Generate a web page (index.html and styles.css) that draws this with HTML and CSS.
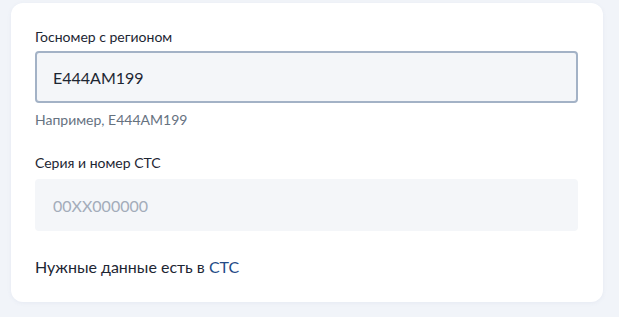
FILE: index.html
```
<html>
<head>
  <meta charset="UTF-8" />
  <link rel="stylesheet" href="styles.css">
</head>
<body>
  <div class="card">
    <div class="field">
      <label class="label">Госномер с регионом</label>
      <div class="input input-active">E444AM199</div>
      <div class="hint">Например, E444AM199</div>
    </div>
    <div class="field field-sts">
      <label class="label">Серия и номер СТС</label>
      <div class="input input-empty">00XX000000</div>
    </div>
    <p class="note">Нужные данные есть в <a href="#" class="link">СТС</a></p>
  </div>
</body>
</html>
```

FILE: styles.css
```
body {
    margin: 0;
    background: #f1f4f9;
    font-family: Lato, "Noto Sans", sans-serif;
    color: #1d2633;
}

.card {
    margin: 3px 0 0 11px;
    width: 592px;
    box-sizing: border-box;
    padding: 24px 25px 23px 24px;
    background: #fff;
    border-radius: 12px;
    box-shadow: 0 1px 4px rgba(100, 120, 160, 0.08);
}

.field {
    display: flex;
    flex-direction: column;
}

.field-sts {
    margin-top: 23px;
}

.label {
    font-size: 14px;
    line-height: 20px;
    color: #1d2633;
}

.input {
    margin-top: 4px;
    height: 52px;
    box-sizing: border-box;
    padding: 0 16px;
    display: flex;
    align-items: center;
    font-size: 16px;
    background: #f4f6f9;
    border: 2px solid #f4f6f9;
    border-radius: 4px;
}

.input-active {
    border-color: #a3b2c6;
    color: #1d2633;
}

.input-empty {
    margin-top: 6px;
    color: #a3acba;
}

.hint {
    margin-top: 7px;
    font-size: 14px;
    line-height: 20px;
    color: #66727f;
}

.note {
    margin: 24px 0 0;
    font-size: 16px;
    line-height: 24px;
}

.link {
    color: #234a86;
    text-decoration: none;
}
```
